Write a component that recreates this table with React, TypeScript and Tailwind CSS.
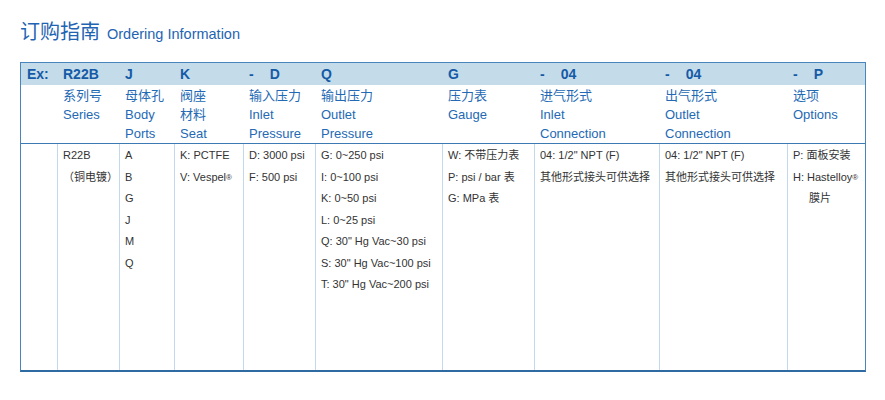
import React from 'react';

const cols = 'grid grid-cols-[36px_62px_55px_69px_72px_127px_92px_125px_128px_78px]';

const codes: { dash?: boolean; code: string }[] = [
  { code: 'Ex:' },
  { code: 'R22B' },
  { code: 'J' },
  { code: 'K' },
  { dash: true, code: 'D' },
  { code: 'Q' },
  { code: 'G' },
  { dash: true, code: '04' },
  { dash: true, code: '04' },
  { dash: true, code: 'P' },
];

const labels: string[][] = [
  [],
  ['系列号', 'Series'],
  ['母体孔', 'Body', 'Ports'],
  ['阀座', '材料', 'Seat'],
  ['输入压力', 'Inlet', 'Pressure'],
  ['输出压力', 'Outlet', 'Pressure'],
  ['压力表', 'Gauge'],
  ['进气形式', 'Inlet', 'Connection'],
  ['出气形式', 'Outlet', 'Connection'],
  ['选项', 'Options'],
];

const Reg = () => <sup className="text-[8px] relative -top-[1px]">®</sup>;

const body: React.ReactNode[][] = [
  ['R22B', '（铜电镀）'],
  ['A', 'B', 'G', 'J', 'M', 'Q'],
  ['K: PCTFE', <>V: Vespel<Reg /></>],
  ['D: 3000 psi', 'F: 500 psi'],
  [
    'G: 0~250 psi',
    'I: 0~100 psi',
    'K: 0~50 psi',
    'L: 0~25 psi',
    'Q: 30" Hg Vac~30 psi',
    'S: 30" Hg Vac~100 psi',
    'T: 30" Hg Vac~200 psi',
  ],
  ['W: 不带压力表', 'P: psi / bar 表', 'G: MPa 表'],
  ['04: 1/2" NPT (F)', '其他形式接头可供选择'],
  ['04: 1/2" NPT (F)', '其他形式接头可供选择'],
  ['P: 面板安装', <>H: Hastelloy<Reg /></>, <span className="pl-4">膜片</span>],
];

export default function App() {
  return (
    <div
      className="w-[885px] h-[400px] bg-white"
      style={{ fontFamily: '"Liberation Sans", Arial, "Noto Sans CJK SC", sans-serif' }}
    >
      <div className="h-[62px] pt-[20px] pl-[20px] flex items-baseline">
        <span className="text-[20px] leading-[24px] text-[#1f64b2]">订购指南</span>
        <span className="ml-[7px] text-[14.5px] text-[#1f64b2]">Ordering Information</span>
      </div>

      <div className="ml-[20px] w-[846px] border-x border-t border-[#4a84bd] border-b-2 border-b-[#2f6aa3]">
        <div className={`${cols} h-[22px] bg-[#c4dcea] items-center text-[14px] font-bold text-[#155aa6]`}>
          {codes.map((c, i) => (
            <div key={i} className="pl-[6px] leading-none">
              {c.dash && <span>-</span>}
              <span className={c.dash ? 'ml-4' : ''}>{c.code}</span>
            </div>
          ))}
        </div>

        <div className={`${cols} h-[58px] pt-[1px] text-[13px] leading-[19px] text-[#2469b4]`}>
          {labels.map((l, i) => (
            <div key={i} className="pl-[6px] flex flex-col">
              {l.map((t, j) => (
                <span key={j}>{t}</span>
              ))}
            </div>
          ))}
        </div>

        <div className={`${cols} h-[227px] border-t border-[#3d79b3] text-[11px] leading-[21.5px] text-[#333333]`}>
          <div />
          {body.map((lines, i) => (
            <div key={i} className="border-l border-[#c3d8ed] pl-[5px] pt-[1px] flex flex-col whitespace-nowrap">
              {lines.map((t, j) => (
                <span key={j}>{t}</span>
              ))}
            </div>
          ))}
        </div>
      </div>
    </div>
  );
}
